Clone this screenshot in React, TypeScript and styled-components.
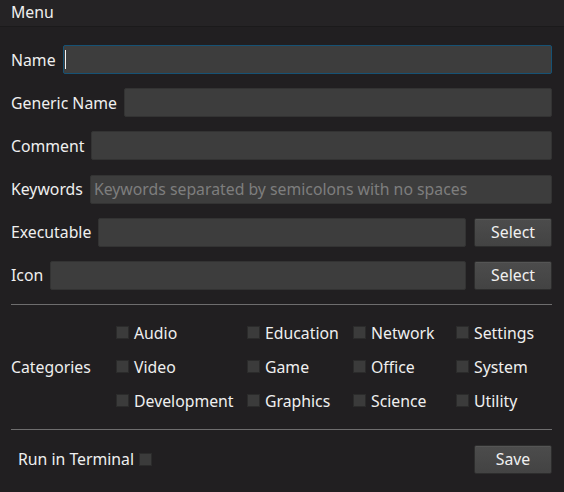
import React from "react";
import styled, { createGlobalStyle } from "styled-components";

const Global = createGlobalStyle`
  html, body { margin: 0; padding: 0; background: #211f21; }
  body { font-family: "Noto Sans", "Open Sans", sans-serif; font-size: 15.8px; color: #efefef; }
  * { box-sizing: border-box; }
`;

const Window = styled.div`
  width: 564px;
  height: 492px;
  background: #211f21;
  display: flex;
  flex-direction: column;
  overflow: hidden;
`;

const TitleBar = styled.div`
  height: 27px;
  background: #252325;
  border-bottom: 1px solid #1b1a1b;
  padding: 0 11px;
  display: flex;
  align-items: center;
  line-height: 1;
  padding-bottom: 1px;
`;

const Body = styled.div`
  padding: 18px 12px 0 11px;
  display: flex;
  flex-direction: column;
`;

const Fields = styled.div`
  display: flex;
  flex-direction: column;
  gap: 14.2px;
`;

const Row = styled.div`
  display: flex;
  align-items: center;
  height: 29px;
  gap: 7px;
`;

const Label = styled.span`
  white-space: nowrap;
  color: #efefef;
`;

const InputWrap = styled.div`
  flex: 1;
  height: 29px;
  min-width: 0;
  position: relative;
  display: flex;
`;

const Input = styled.input<{ $focused?: boolean }>`
  flex: 1;
  height: 29px;
  min-width: 0;
  background: #3d3d3d;
  border: 1px solid ${(p) => (p.$focused ? "#165275" : "#333")};
  border-radius: 2px;
  color: #e0e0e0;
  font: inherit;
  padding: 0 3px;
  outline: none;
  caret-color: #fff;
  &::placeholder { color: #7e7e7e; }
`;

const Caret = styled.span`
  position: absolute;
  left: 2px;
  top: 5px;
  width: 1px;
  height: 19px;
  background: #f2f2f2;
`;

const Button = styled.button`
  width: 78px;
  height: 29px;
  margin-left: 1px;
  background: linear-gradient(#4c4c4c, #434343);
  border: 1px solid #2d2d2d;
  border-radius: 2px;
  box-shadow: inset 0 1px 0 #555;
  color: #f0f0f0;
  font: inherit;
  padding: 0;
`;

const Separator = styled.div<{ $top: number; $bottom: number }>`
  height: 1px;
  background: #6e6d6e;
  margin-top: ${(p) => p.$top}px;
  margin-bottom: ${(p) => p.$bottom}px;
`;

const CategoryRow = styled.div`
  display: flex;
  align-items: center;
`;

const CategoryLabel = styled(Label)`
  width: 105px;
`;

const Grid = styled.div`
  display: grid;
  grid-template-columns: 131px 106px 103px auto;
  grid-auto-rows: 22px;
  row-gap: 12px;
`;

const Check = styled.label`
  display: flex;
  align-items: center;
  gap: 5px;
  white-space: nowrap;
`;

const Box = styled.span`
  width: 13px;
  height: 13px;
  background: #3b3b3b;
  border: 1px solid #2b2b2b;
  flex: none;
`;

const BottomRow = styled.div`
  display: flex;
  align-items: center;
  height: 29px;
  padding-left: 7px;
`;

const TerminalCheck = styled(Check)`
  flex: 1;
`;

const categories = [
  ["Audio", "Education", "Network", "Settings"],
  ["Video", "Game", "Office", "System"],
  ["Development", "Graphics", "Science", "Utility"],
];

export default function App() {
  return (
    <>
      <Global />
      <Window>
        <TitleBar>Menu</TitleBar>
        <Body>
          <Fields>
            <Row>
              <Label>Name</Label>
              <InputWrap>
                <Input $focused />
                <Caret />
              </InputWrap>
            </Row>
            <Row>
              <Label>Generic Name</Label>
              <Input />
            </Row>
            <Row>
              <Label>Comment</Label>
              <Input />
            </Row>
            <Row>
              <Label>Keywords</Label>
              <Input placeholder="Keywords separated by semicolons with no spaces" />
            </Row>
            <Row>
              <Label>Executable</Label>
              <Input />
              <Button>Select</Button>
            </Row>
            <Row>
              <Label>Icon</Label>
              <Input />
              <Button>Select</Button>
            </Row>
          </Fields>
          <Separator $top={14} $bottom={17} />
          <CategoryRow>
            <CategoryLabel>Categories</CategoryLabel>
            <Grid>
              {categories.flat().map((c) => (
                <Check key={c}>
                  <Box />
                  {c}
                </Check>
              ))}
            </Grid>
          </CategoryRow>
          <Separator $top={17} $bottom={15} />
          <BottomRow>
            <TerminalCheck>
              Run in Terminal
              <Box />
            </TerminalCheck>
            <Button>Save</Button>
          </BottomRow>
        </Body>
      </Window>
    </>
  );
}
